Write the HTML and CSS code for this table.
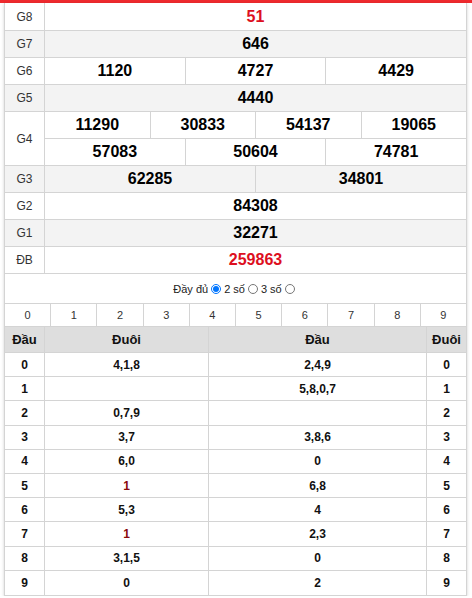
FILE: index.html
```html
<!DOCTYPE html>
<html lang="vi">
<head>
<meta charset="utf-8">
<title>Kết quả xổ số</title>
<link rel="stylesheet" href="styles.css">
</head>
<body>
<div class="topbar"></div>
<div class="box">
  <div class="results">
    <div class="lbl">G8</div><div class="val c12 red">51</div>
    <div class="lbl alt">G7</div><div class="val c12 alt">646</div>
    <div class="lbl">G6</div><div class="val c4">1120</div><div class="val c4">4727</div><div class="val c4">4429</div>
    <div class="lbl alt">G5</div><div class="val c12 alt">4440</div>
    <div class="lbl g4">G4</div><div class="val c3">11290</div><div class="val c3">30833</div><div class="val c3">54137</div><div class="val c3">19065</div>
    <div class="val c4">57083</div><div class="val c4">50604</div><div class="val c4">74781</div>
    <div class="lbl alt">G3</div><div class="val c6 alt">62285</div><div class="val c6 alt">34801</div>
    <div class="lbl">G2</div><div class="val c12">84308</div>
    <div class="lbl alt">G1</div><div class="val c12 alt">32271</div>
    <div class="lbl">ĐB</div><div class="val c12 red">259863</div>
  </div>
  <div class="options">
    <span>Đầy đủ</span><input type="radio" name="m" checked><span>2 số</span><input type="radio" name="m"><span>3 số</span><input type="radio" name="m">
  </div>
  <div class="digits">
    <div>0</div><div>1</div><div>2</div><div>3</div><div>4</div><div>5</div><div>6</div><div>7</div><div>8</div><div>9</div>
  </div>
  <div class="lt">
    <div class="th">Đầu</div><div class="th">Đuôi</div><div class="th">Đầu</div><div class="th">Đuôi</div>
    <div class="td">0</div><div class="td">4,1,8</div><div class="td">2,4,9</div><div class="td">0</div>
    <div class="td">1</div><div class="td"></div><div class="td">5,8,0,7</div><div class="td">1</div>
    <div class="td">2</div><div class="td">0,7,9</div><div class="td"></div><div class="td">2</div>
    <div class="td">3</div><div class="td">3,7</div><div class="td">3,8,6</div><div class="td">3</div>
    <div class="td">4</div><div class="td">6,0</div><div class="td">0</div><div class="td">4</div>
    <div class="td">5</div><div class="td dred">1</div><div class="td">6,8</div><div class="td">5</div>
    <div class="td">6</div><div class="td">5,3</div><div class="td">4</div><div class="td">6</div>
    <div class="td">7</div><div class="td dred">1</div><div class="td">2,3</div><div class="td">7</div>
    <div class="td">8</div><div class="td">3,1,5</div><div class="td">0</div><div class="td">8</div>
    <div class="td">9</div><div class="td">0</div><div class="td">2</div><div class="td">9</div>
  </div>
</div>
</body>
</html>
```

FILE: styles.css
```css
html, body {
  margin: 0;
  padding: 0;
  background: #fff;
}
body {
  font-family: "Liberation Sans", Arial, sans-serif;
  color: #111;
}
.topbar {
  height: 3px;
  background: #ee2a2e;
}
.box {
  width: 462px;
  margin-left: 4px;
  border-left: 1px solid #d4d4d4;
  border-bottom: 1px solid #d4d4d4;
  box-shadow: 0 1px 3px rgba(0, 0, 0, 0.18);
}
.results {
  display: grid;
  grid-template-columns: 40px repeat(12, 1fr);
  grid-template-rows: 28px;
  grid-auto-rows: 27px;
}
.results > div {
  border-right: 1px solid #d4d4d4;
  border-bottom: 1px solid #d4d4d4;
  display: flex;
  align-items: center;
  justify-content: center;
  box-sizing: border-box;
}
.lbl {
  font-size: 12px;
  color: #333;
}
.lbl.g4 {
  grid-row: span 2;
}
.val {
  font-size: 16px;
  font-weight: bold;
  color: #000;
}
.alt {
  background: #f3f3f3;
}
.c12 { grid-column: span 12; }
.c6 { grid-column: span 6; }
.c4 { grid-column: span 4; }
.c3 { grid-column: span 3; }
.red { color: #dd0f1e; }

.options {
  height: 29px;
  border-right: 1px solid #d4d4d4;
  border-bottom: 1px solid #d4d4d4;
  display: flex;
  align-items: center;
  justify-content: center;
  font-size: 11px;
  color: #222;
}
.options input {
  width: 10px;
  height: 10px;
  margin: 0 3px;
}
.digits {
  display: grid;
  grid-template-columns: repeat(10, 1fr);
  height: 23px;
}
.digits > div {
  border-right: 1px solid #d4d4d4;
  border-bottom: 1px solid #d4d4d4;
  display: flex;
  align-items: center;
  justify-content: center;
  font-size: 11px;
  color: #333;
}
.lt {
  display: grid;
  grid-template-columns: 40px 164px 218px 40px;
  grid-template-rows: 26px repeat(10, 24.2px);
}
.lt > div {
  border-right: 1px solid #d4d4d4;
  border-bottom: 1px solid #d4d4d4;
  display: flex;
  align-items: center;
  justify-content: center;
  font-weight: bold;
  color: #111;
}
.lt > div:nth-last-child(-n+4) {
  border-bottom: none;
}
.th {
  background: #dedede;
  font-size: 13px;
}
.td {
  font-size: 12px;
}
.td.dred {
  color: #8a0a0a;
}
```
